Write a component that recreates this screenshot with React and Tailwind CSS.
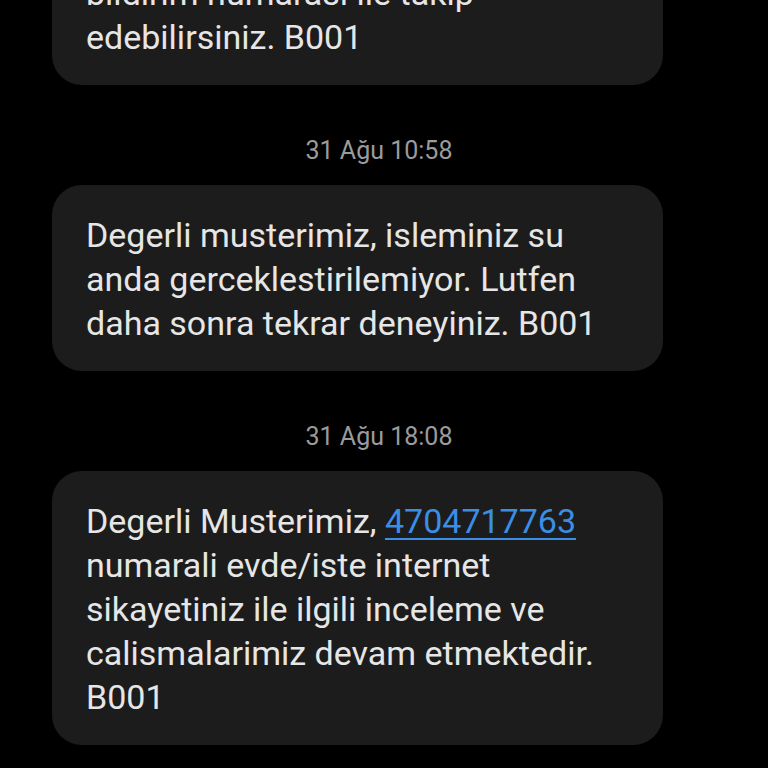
import React from "react";

const firstLines = [
  "Degerli musterimiz, talebiniz",
  "alinmistir. Talebinizi 123456",
  "bildirim numarasi ile takip",
  "edebilirsiniz. B001",
];

function Bubble({ children, className = "" }) {
  return (
    <div className={`w-[611px] rounded-[30px] bg-[#1c1c1c] pl-[34px] pr-[40px] pt-[28px] pb-[26px] text-[34px] leading-[44px] text-[#e6e6e6] ${className}`}>
      {children}
    </div>
  );
}

function Stamp({ time }) {
  return (
    <div className="w-[654px] mt-[51px] mb-[19px] text-center text-[25px] leading-[30px] text-[#9b9b9b]">
      {time}
    </div>
  );
}

export default function App() {
  return (
    <div
      className="h-[768px] w-[768px] overflow-hidden bg-black"
      style={{ fontFamily: "Roboto, 'Noto Sans', sans-serif" }}
    >
      <div className="flex flex-col pl-[52px] -mt-[145px]">
        {/* earlier message, mostly scrolled off the top */}
        <Bubble>
          {firstLines.map((l) => (
            <div key={l} className="whitespace-nowrap">{l}</div>
          ))}
        </Bubble>

        <Stamp time="31 Ağu 10:58" />
        <Bubble>
          Degerli musterimiz, isleminiz su anda gerceklestirilemiyor. Lutfen daha sonra tekrar deneyiniz. B001
        </Bubble>

        <Stamp time="31 Ağu 18:08" />
        <Bubble>
          Degerli Musterimiz,{" "}
          <span className="text-[#3a8ee6] underline decoration-[2px] underline-offset-[5px]">
            4704717763
          </span>{" "}
          numarali evde/iste internet sikayetiniz ile ilgili inceleme ve calismalarimiz devam etmektedir. B001
        </Bubble>
      </div>
    </div>
  );
}
